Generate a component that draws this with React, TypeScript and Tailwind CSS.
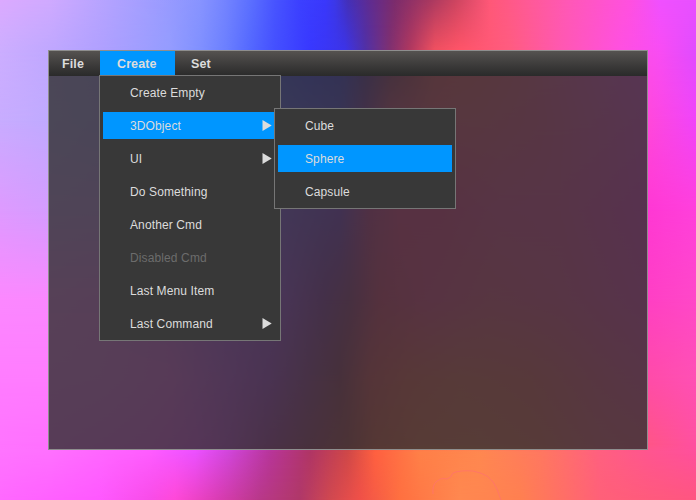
import React from 'react';

type Stop = [number, string];

// Colour rows of the wallpaper: each is a horizontal ramp at height y,
// and consecutive rows are blended into each other vertically.
const ROWS: { y: number; stops: Stop[] }[] = [
  { y: 0, stops: [[0, '#dcaaff'], [50, '#d0aaff'], [100, '#b8a4ff'], [160, '#9c9cff'], [200, '#8894ff'], [225, '#7484ff'], [250, '#5c70ff'], [275, '#4854ff'], [300, '#3c40ff'], [325, '#3a38fc'], [335, '#3c38e8'], [348, '#4430b8'], [370, '#602c90'], [395, '#7c2c6c'], [430, '#a83860'], [455, '#cc4460'], [490, '#ff5878'], [530, '#ff5a98'], [570, '#ff58b8'], [630, '#ff50e0'], [660, '#f050ff'], [696, '#e850ff']] },
  { y: 50, stops: [[0, '#ccaeff'], [48, '#c0a8ff'], [100, '#b0a0ff'], [170, '#949cff'], [200, '#8090ff'], [225, '#6c80ff'], [250, '#5468ff'], [275, '#4450ff'], [310, '#3838ff'], [345, '#3c34e8'], [365, '#5030a8'], [390, '#803070'], [410, '#b03860'], [435, '#f05060'], [460, '#ff5468'], [510, '#ff5c80'], [560, '#ff58b0'], [620, '#ff50e0'], [660, '#f84cf4'], [696, '#e04cff']] },
  { y: 120, stops: [[0, '#c8acff'], [48, '#c0aaff'], [100, '#b8a0ff'], [170, '#9c98ff'], [230, '#7880ff'], [285, '#6060ff'], [340, '#5848f0'], [365, '#9034b0'], [390, '#e84888'], [430, '#ff5480'], [480, '#ff5684'], [540, '#ff5098'], [590, '#ff50b8'], [650, '#ff48dc'], [696, '#f044fa']] },
  { y: 210, stops: [[0, '#de9aff'], [48, '#d49cff'], [100, '#d498ff'], [170, '#b880ff'], [230, '#a060ff'], [285, '#9054f8'], [340, '#8838e0'], [370, '#d83498'], [400, '#ff3890'], [440, '#ff3890'], [500, '#ff48a0'], [560, '#ff48a8'], [650, '#ff38d4'], [696, '#ff40dc']] },
  { y: 300, stops: [[0, '#fc88ff'], [48, '#fa88ff'], [100, '#fa80ff'], [170, '#e868ff'], [230, '#c054ff'], [285, '#b048f0'], [325, '#9830b0'], [350, '#a83088'], [380, '#f03878'], [430, '#ff4090'], [490, '#ff508c'], [560, '#ff4c9c'], [650, '#ff40c4'], [696, '#ff48c8']] },
  { y: 380, stops: [[0, '#ff7cff'], [48, '#ff7cff'], [100, '#ff78ff'], [170, '#ff68ff'], [230, '#d450f8'], [270, '#b840e0'], [310, '#a8389c'], [340, '#a83468'], [370, '#f0485c'], [410, '#ff5c58'], [460, '#ff6860'], [530, '#ff6068'], [590, '#ff5488'], [650, '#ff4ca8'], [696, '#ff50b4']] },
  { y: 444, stops: [[0, '#ff74ff'], [50, '#ff70ff'], [150, '#ff60ff'], [195, '#f450ff'], [230, '#d848e8'], [270, '#b838b0'], [310, '#b03578'], [348, '#c04050'], [375, '#f05848'], [420, '#ff6c50'], [480, '#ff7058'], [540, '#ff6860'], [600, '#ff5c80'], [650, '#ff5588'], [696, '#ff50a0']] },
  { y: 452, stops: [[0, '#ff74ff'], [50, '#ff70ff'], [150, '#ff5cff'], [195, '#ec50ff'], [230, '#d045d8'], [270, '#b8359a'], [310, '#b03565'], [348, '#d04848'], [375, '#ff6040'], [420, '#ff8048'], [480, '#ff8850'], [540, '#ff7860'], [600, '#ff6080'], [650, '#ff5590'], [696, '#ff509c']] },
  { y: 500, stops: [[0, '#ff68ff'], [100, '#ff58ff'], [150, '#f84ce8'], [175, '#ff48d8'], [220, '#d83cb0'], [260, '#b83888'], [300, '#b03868'], [330, '#d04850'], [360, '#f05048'], [400, '#ff7040'], [460, '#ff8850'], [520, '#ff8050'], [600, '#ff6078'], [696, '#ff5580']] },
];

function Wallpaper() {
  return (
    <svg className="absolute inset-0" width="696" height="500" viewBox="0 0 696 500" aria-hidden="true">
      <defs>
        {ROWS.map((row, i) => {
          const prev = i ? ROWS[i - 1].y : 0;
          return (
            <React.Fragment key={row.y}>
              <linearGradient id={`row${i}`} gradientUnits="userSpaceOnUse" x1="0" x2="696" y1="0" y2="0">
                {row.stops.map(([x, color]) => (
                  <stop key={x} offset={x / 696} stopColor={color} />
                ))}
              </linearGradient>
              {i > 0 && (
                <>
                  <linearGradient id={`fade${i}`} gradientUnits="userSpaceOnUse" x1="0" x2="0" y1={prev} y2={row.y}>
                    <stop offset="0" stopColor="#fff" stopOpacity="0" />
                    <stop offset="1" stopColor="#fff" stopOpacity="1" />
                  </linearGradient>
                  <mask id={`mask${i}`} maskUnits="userSpaceOnUse" x="0" y="0" width="696" height="500">
                    <rect y={prev} width="696" height={500 - prev} fill={`url(#fade${i})`} />
                  </mask>
                </>
              )}
            </React.Fragment>
          );
        })}
      </defs>
      {ROWS.map((row, i) => (
        <rect key={row.y} width="696" height="500" fill={`url(#row${i})`} mask={i ? `url(#mask${i})` : undefined} />
      ))}
      <path
        d="M433 494q-1-9 4-13t10-2q4-1 6-6 7-3 20-2 9 2 14 5 7 5 10 13l4 11"
        fill="none"
        stroke="#ff7468"
        strokeOpacity=".9"
      />
    </svg>
  );
}

type Item = { label: string; active?: boolean; disabled?: boolean; arrow?: boolean; children?: Item[] };

const createMenu: Item[] = [
  { label: 'Create Empty' },
  {
    label: '3DObject',
    active: true,
    arrow: true,
    children: [{ label: 'Cube' }, { label: 'Sphere', active: true }, { label: 'Capsule' }],
  },
  { label: 'UI', arrow: true },
  { label: 'Do Something' },
  { label: 'Another Cmd' },
  { label: 'Disabled Cmd', disabled: true },
  { label: 'Last Menu Item' },
  { label: 'Last Command', arrow: true },
];

function Menu({ items, className }: { items: Item[]; className: string }) {
  return (
    <ul
      className={`absolute flex w-[182px] flex-col gap-1.5 border border-[#767676] bg-[#383838] p-[3px] text-[12px] font-normal tracking-[0.12px] ${className}`}
    >
      {items.map((item) => (
        <li
          key={item.label}
          className={`relative flex h-[27px] items-center justify-between pr-[5px] pl-[27px] ${
            item.active ? 'bg-[#0096ff]' : ''
          } ${item.disabled ? 'text-[#6c6c6c]' : 'text-[#dcdcdc]'}`}
        >
          <span className="pt-px whitespace-nowrap">{item.label}</span>
          {item.arrow && (
            <svg width="10" height="11" viewBox="0 0 10 11" className="fill-[#dcdcdc]">
              <path d="M.5 0 9.7 5.5.5 11z" />
            </svg>
          )}
          {item.children && <Menu items={item.children} className="top-[-4px] left-[171px] z-10" />}
        </li>
      ))}
    </ul>
  );
}

export default function App() {
  return (
    <div className="relative h-[500px] w-[696px] overflow-hidden px-12 py-[50px] font-['Liberation_Sans',Arial,sans-serif]">
      <Wallpaper />
      <main className="relative flex h-[400px] w-[600px] flex-col border border-[#8e8e8e] bg-[#303030]/81">
        <nav className="flex h-[25px] bg-linear-to-b from-[#555250] to-[#2a2a2a] text-[12.5px] font-bold tracking-[0.1px] text-[#dcdcdc]">
          <div className="flex w-[51px] items-center pt-px pl-[13px]">File</div>
          <div className="relative flex w-[75px] items-center bg-[#0096ff] pt-px pl-[17px]">
            Create
            <Menu items={createMenu} className="top-6 -left-px" />
          </div>
          <div className="flex items-center pt-px pl-4">Set</div>
        </nav>
      </main>
    </div>
  );
}
